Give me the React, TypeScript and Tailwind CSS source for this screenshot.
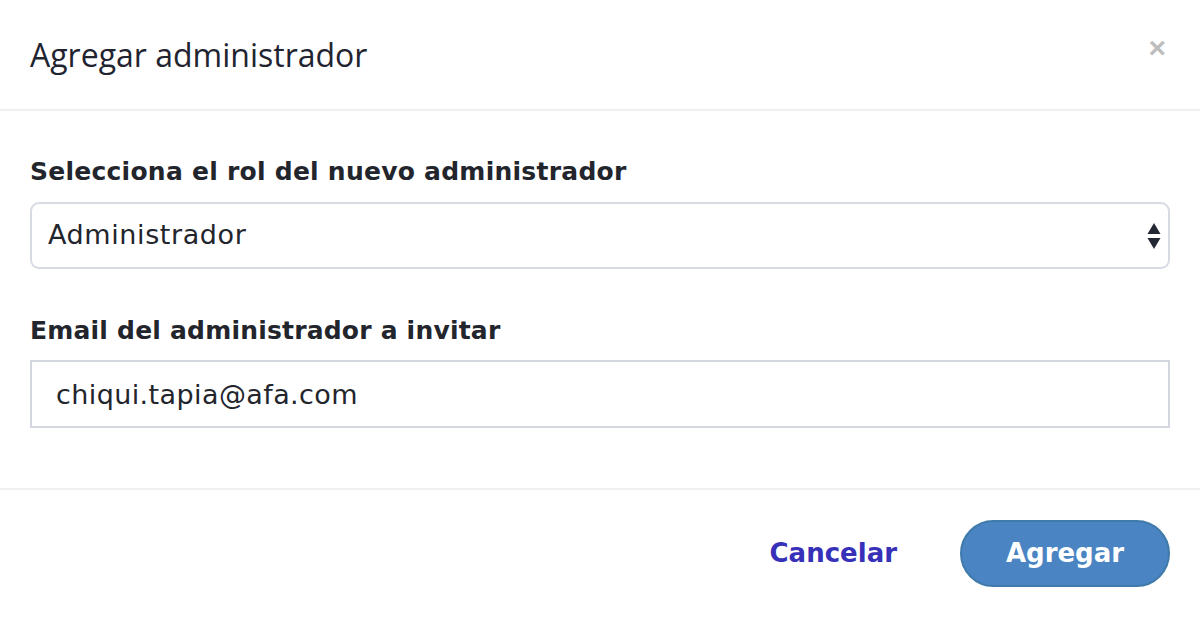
import React, { useState } from "react";

export default function App() {
  const [rol, setRol] = useState<string>("Administrador");
  const [email, setEmail] = useState<string>("chiqui.tapia@afa.com");

  return (
    <div className="w-[1200px] h-[618px] bg-white flex flex-col">
      {/* encabezado */}
      <div className="h-[111px] flex items-center justify-between px-[30px] border-b-2 border-[#f0f0f0]">
        <h2 className="text-[32px] text-[#1f2430] font-['Open_Sans',sans-serif]">Agregar administrador</h2>
        <button className="text-[#bdbdbd] text-[30px] font-bold leading-none mr-[4px] mb-[14px] font-['Liberation_Sans',sans-serif]">×</button>
      </div>

      {/* cuerpo */}
      <div className="flex-1 px-[30px] pt-[46px] font-['DejaVu_Sans',sans-serif]">
        <label className="block text-[25px] font-bold text-[#23252d] leading-[30px] tracking-[0.25px]">Selecciona el rol del nuevo administrador</label>
        <div className="relative mt-[15px]">
          <select
            value={rol}
            onChange={(e) => setRol(e.target.value)}
            className="appearance-none w-full h-[67px] rounded-[9px] border-2 border-[#d7dae3] pl-[16px] text-[27px] tracking-[0.6px] text-[#23252d] bg-white focus:outline-none"
          >
            <option>Administrador</option>
            <option>Editor</option>
          </select>
          <svg className="absolute right-[9px] top-[21px] pointer-events-none" width="14" height="26" viewBox="0 0 14 26">
            <path d="M7 0 L13.5 11 L0.5 11 Z" fill="#222733" />
            <path d="M0.5 15 L13.5 15 L7 26 Z" fill="#222733" />
          </svg>
        </div>

        <label className="block text-[25px] font-bold text-[#23252d] leading-[30px] tracking-[0.2px] mt-[47px]">Email del administrador a invitar</label>
        <input
          type="email"
          value={email}
          onChange={(e) => setEmail(e.target.value)}
          className="block w-full h-[68px] mt-[14px] border-2 border-[#d4d7e0] pl-[24px] text-[27px] tracking-[0.4px] text-[#23252d] focus:outline-none"
        />
      </div>

      {/* pie */}
      <div className="h-[130px] border-t-2 border-[#f0f0f0] flex items-center justify-end gap-[63px] px-[30px] font-['DejaVu_Sans',sans-serif] pb-[2px]">
        <button className="text-[26px] font-bold text-[#3730b8]">Cancelar</button>
        <button className="w-[210px] h-[67px] rounded-full bg-[#4a84c2] border-2 border-[#3f7aaa] text-white text-[26px] font-bold">Agregar</button>
      </div>
    </div>
  );
}
